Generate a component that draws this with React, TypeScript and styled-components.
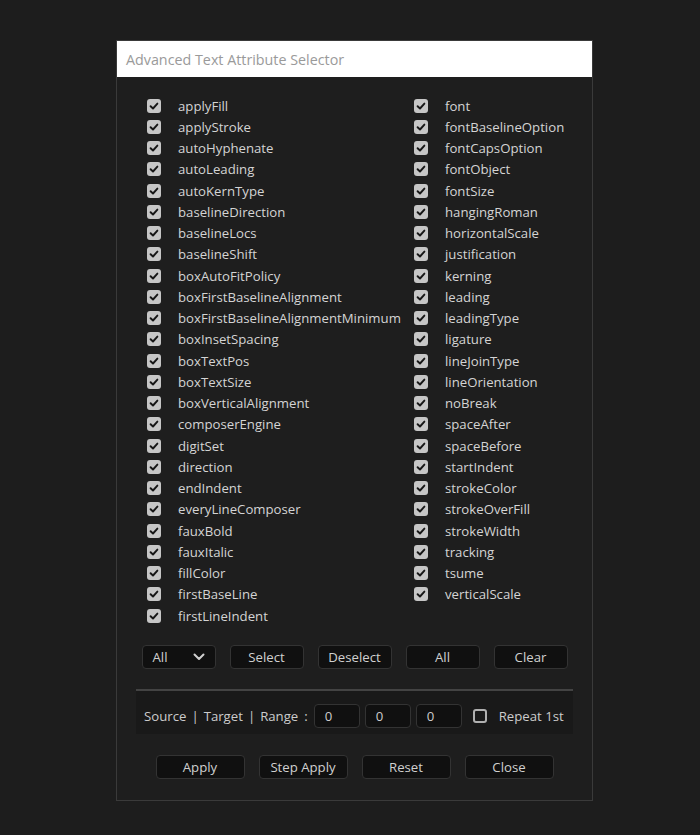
import React, { FC } from "react";
import styled, { createGlobalStyle } from "styled-components";

const GlobalStyle = createGlobalStyle`
  html, body {
    margin: 0;
    padding: 0;
    background: #1d1d1d;
  }
  body {
    font-family: "Open Sans", "Noto Sans", sans-serif;
    color: #c8c8c8;
  }
`;

const leftAttrs = [
  "applyFill", "applyStroke", "autoHyphenate", "autoLeading", "autoKernType",
  "baselineDirection", "baselineLocs", "baselineShift", "boxAutoFitPolicy",
  "boxFirstBaselineAlignment", "boxFirstBaselineAlignmentMinimum", "boxInsetSpacing",
  "boxTextPos", "boxTextSize", "boxVerticalAlignment", "composerEngine", "digitSet",
  "direction", "endIndent", "everyLineComposer", "fauxBold", "fauxItalic",
  "fillColor", "firstBaseLine", "firstLineIndent",
];

const rightAttrs = [
  "font", "fontBaselineOption", "fontCapsOption", "fontObject", "fontSize",
  "hangingRoman", "horizontalScale", "justification", "kerning", "leading",
  "leadingType", "ligature", "lineJoinType", "lineOrientation", "noBreak",
  "spaceAfter", "spaceBefore", "startIndent", "strokeColor", "strokeOverFill",
  "strokeWidth", "tracking", "tsume", "verticalScale",
];

const Page = styled.div`
  padding-top: 40px;
  padding-left: 116px;
  height: 795px;
`;

const Dialog = styled.div`
  width: 475px;
  border: 1px solid #3a3a3a;
  background: #1e1e1e;
`;

const TitleBar = styled.div`
  height: 36px;
  background: #ffffff;
  display: flex;
  align-items: center;
  padding-left: 9px;
  font-size: 14.3px;
  color: #9a9a9a;
`;

const Body = styled.div`
  padding: 18px 19px 21px;
`;

const Columns = styled.div`
  display: grid;
  grid-template-columns: 267px 1fr;
  padding-left: 11px;
`;

const Column = styled.div`
  display: flex;
  flex-direction: column;
`;

const Row = styled.label`
  height: 21.25px;
  display: flex;
  align-items: center;
  gap: 17px;
  font-size: 13.2px;
  color: #d4d4d4;
  white-space: nowrap;
`;

const CheckBox = styled.span<{ $checked?: boolean }>`
  width: 14px;
  height: 14px;
  flex: 0 0 14px;
  box-sizing: border-box;
  border-radius: 3px;
  display: flex;
  align-items: center;
  justify-content: center;
  background: ${(p) => (p.$checked ? "#c6c6c6" : "transparent")};
  border: ${(p) => (p.$checked ? "none" : "2px solid #b0b0b0")};
`;

const Check: FC = () => (
  <svg width="10" height="10" viewBox="0 0 10 10">
    <path d="M1.6 5.2 L4 7.5 L8.4 2.6" fill="none" stroke="#161616" strokeWidth="1.9" strokeLinecap="round" strokeLinejoin="round" />
  </svg>
);

const ButtonRow = styled.div<{ $gap: number }>`
  display: flex;
  justify-content: center;
  gap: ${(p) => p.$gap}px;
`;

const Button = styled.button<{ $width: number }>`
  width: ${(p) => p.$width}px;
  height: 24px;
  box-sizing: border-box;
  background: #101010;
  border: 1px solid #333333;
  border-radius: 4px;
  color: #d0d0d0;
  font-family: "Open Sans", "Noto Sans", sans-serif;
  font-size: 13.2px;
  padding: 0 10px;
  display: flex;
  align-items: center;
  justify-content: center;
  gap: 8px;
`;

const SelectButton = styled(Button)`
  justify-content: space-between;
`;

const SelectionRow = styled(ButtonRow)`
  margin-top: 19px;
`;

const Separator = styled.div`
  margin-top: 20px;
  height: 2px;
  background: #434343;
`;

const RangePanel = styled.div`
  height: 43px;
  box-sizing: border-box;
  padding: 6px 8px 0;
  background: #191919;
  display: flex;
  align-items: center;
  font-size: 13.2px;
  color: #cccccc;
  white-space: nowrap;
`;

const Pipe = styled.span`
  margin: 0 5px;
  color: #cccccc;
`;

const Colon = styled(Pipe)`
  margin: 0 6px 0 6px;
`;

const NumberInput = styled.div`
  width: 46px;
  height: 24px;
  box-sizing: border-box;
  margin-right: 5px;
  background: #101010;
  border: 1px solid #333333;
  border-radius: 4px;
  display: flex;
  align-items: center;
  padding-left: 10px;
  color: #cccccc;
`;

const RepeatBox = styled.label`
  display: flex;
  align-items: center;
  gap: 12px;
  margin-left: 6px;
`;

const ActionRow = styled(ButtonRow)`
  margin-top: 21px;
`;

const AttrColumn: FC<{ items: string[] }> = ({ items }) => (
  <Column>
    {items.map((name) => (
      <Row key={name}>
        <CheckBox $checked>
          <Check />
        </CheckBox>
        {name}
      </Row>
    ))}
  </Column>
);

const Chevron: FC = () => (
  <svg width="12" height="8" viewBox="0 0 12 8">
    <path d="M1.5 1.5 L6 6 L10.5 1.5" fill="none" stroke="#d0d0d0" strokeWidth="2" strokeLinecap="round" strokeLinejoin="round" />
  </svg>
);

const App: FC = () => (
  <>
    <GlobalStyle />
    <Page>
      <Dialog>
        <TitleBar>Advanced Text Attribute Selector</TitleBar>
        <Body>
          <Columns>
            <AttrColumn items={leftAttrs} />
            <AttrColumn items={rightAttrs} />
          </Columns>

          <SelectionRow $gap={14}>
            <SelectButton $width={74}>
              All
              <Chevron />
            </SelectButton>
            <Button $width={74}>Select</Button>
            <Button $width={74}>Deselect</Button>
            <Button $width={74}>All</Button>
            <Button $width={74}>Clear</Button>
          </SelectionRow>

          <Separator />
          <RangePanel>
            Source<Pipe>|</Pipe>Target<Pipe>|</Pipe>Range
            <Colon>:</Colon>
            <NumberInput>0</NumberInput>
            <NumberInput>0</NumberInput>
            <NumberInput>0</NumberInput>
            <RepeatBox>
              <CheckBox />
              Repeat 1st
            </RepeatBox>
          </RangePanel>

          <ActionRow $gap={14}>
            <Button $width={89}>Apply</Button>
            <Button $width={89}>Step Apply</Button>
            <Button $width={89}>Reset</Button>
            <Button $width={89}>Close</Button>
          </ActionRow>
        </Body>
      </Dialog>
    </Page>
  </>
);

export default App;
